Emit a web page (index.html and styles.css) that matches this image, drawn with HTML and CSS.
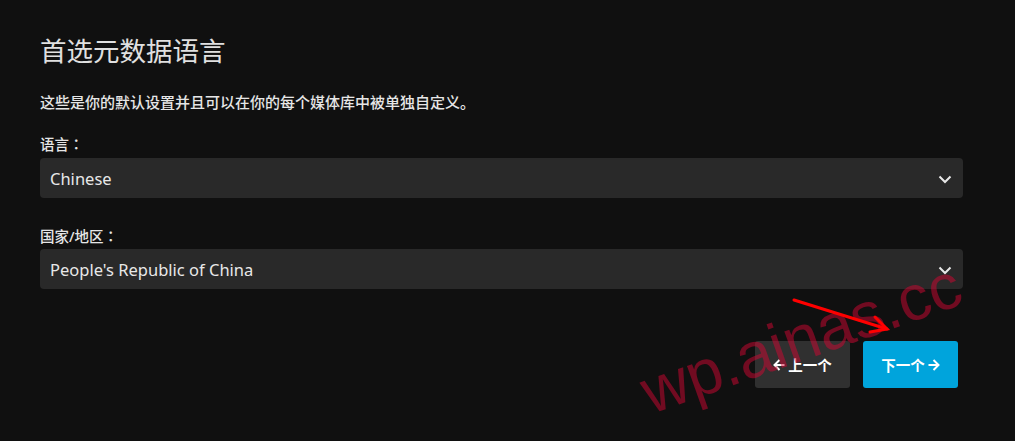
FILE: index.html
```html
<!DOCTYPE html>
<html>
<head>
	<meta charset="utf-8">
	<title>首选元数据语言</title>
	<link rel="stylesheet" href="styles.css">
</head>
<body>
	<div class="page">
		<h1 class="title">首选元数据语言</h1>
		<p class="desc">这些是你的默认设置并且可以在你的每个媒体库中被单独自定义<span class="punct">。</span></p>

		<div class="field">
			<label class="label">语言<span class="punct">：</span></label>
			<div class="select">
				<span>Chinese</span>
				<svg class="chev" width="14" height="9" viewBox="0 0 14 9"><path d="M1.5 1.5 L7 7 L12.5 1.5" fill="none" stroke="#e8e8e8" stroke-width="2"/></svg>
			</div>
		</div>

		<div class="field field2">
			<label class="label">国家/地区<span class="punct">：</span></label>
			<div class="select">
				<span>People's Republic of China</span>
				<svg class="chev" width="14" height="9" viewBox="0 0 14 9"><path d="M1.5 1.5 L7 7 L12.5 1.5" fill="none" stroke="#e8e8e8" stroke-width="2"/></svg>
			</div>
		</div>

		<div class="buttons">
			<button class="btn btn-prev">
				<svg class="arr" width="12" height="12" viewBox="0 0 12 12"><path d="M11.5 6 H1.5 M6.5 1 L1.5 6 L6.5 11" fill="none" stroke="#fff" stroke-width="2"/></svg>
				<span>上一个</span>
			</button>
			<button class="btn btn-next">
				<span>下一个</span>
				<svg class="arr" width="12" height="12" viewBox="0 0 12 12"><path d="M0.5 6 H10.5 M5.5 1 L10.5 6 L5.5 11" fill="none" stroke="#fff" stroke-width="2"/></svg>
			</button>
		</div>
	</div>

	<div class="watermark">wp.ainas.cc</div>
	<svg class="mark" width="1015" height="441" viewBox="0 0 1015 441">
		<g stroke="#ff0000" stroke-width="3" stroke-linecap="round" fill="none">
			<path d="M794 300 L887 329"/>
			<path d="M875 317 L887 329 L870 332"/>
		</g>
	</svg>
</body>
</html>
```

FILE: styles.css
```css
*{margin: 0; padding: 0; box-sizing: border-box;}
body{background: #101010; color: #e6e6e6; font-family: "Noto Sans", "Noto Sans CJK SC", sans-serif; width: 1015px; height: 441px; overflow: hidden;}
.page{padding: 36px 52px 0 40px;}
.title{font-size: 26.5px; font-weight: 400; line-height: 30px; color: #e0e0e0;}
.desc{font-size: 15px; line-height: 20px; margin-top: 26px; color: #e6e6e6; font-weight: 500;}
.punct{font-family: "Noto Sans CJK JP", sans-serif;}
.field{margin-top: 22px;}
.field2{margin-top: 28px;}
.label{display: block; font-size: 14.5px; line-height: 20px; margin-bottom: 4px; color: #e6e6e6; font-weight: 500;}
.field2 .label{margin-bottom: 3px;}
.select{display: flex; align-items: center; justify-content: space-between; height: 40px; background: #292929; border-radius: 4px; padding: 0 11px 0 10px; font-size: 16.5px; color: #e8e8e8;}
.chev{margin-top: 2px;}
.buttons{display: flex; justify-content: flex-end; gap: 13px; margin-top: 52px; padding-right: 5px;}
.btn{height: 47px; width: 95px; border: none; border-radius: 3px; font-family: "Noto Sans", "Noto Sans CJK SC", sans-serif; font-size: 14.5px; font-weight: 700; color: #fff; display: flex; align-items: center; justify-content: center; gap: 3px;}
.btn .arr{display: block; flex-shrink: 0;}
.btn-prev{background: #303030;}
.btn-next{background: #00a4dc;}
.watermark{position: absolute; left: 654px; top: 360px; font-family: "Liberation Sans", sans-serif; font-size: 64px; color: rgba(210, 6, 50, 0.5); transform: rotate(-19.5deg); transform-origin: 0 100%; white-space: nowrap; line-height: 1; pointer-events: none;}
.mark{position: absolute; left: 0; top: 0; pointer-events: none;}
```
